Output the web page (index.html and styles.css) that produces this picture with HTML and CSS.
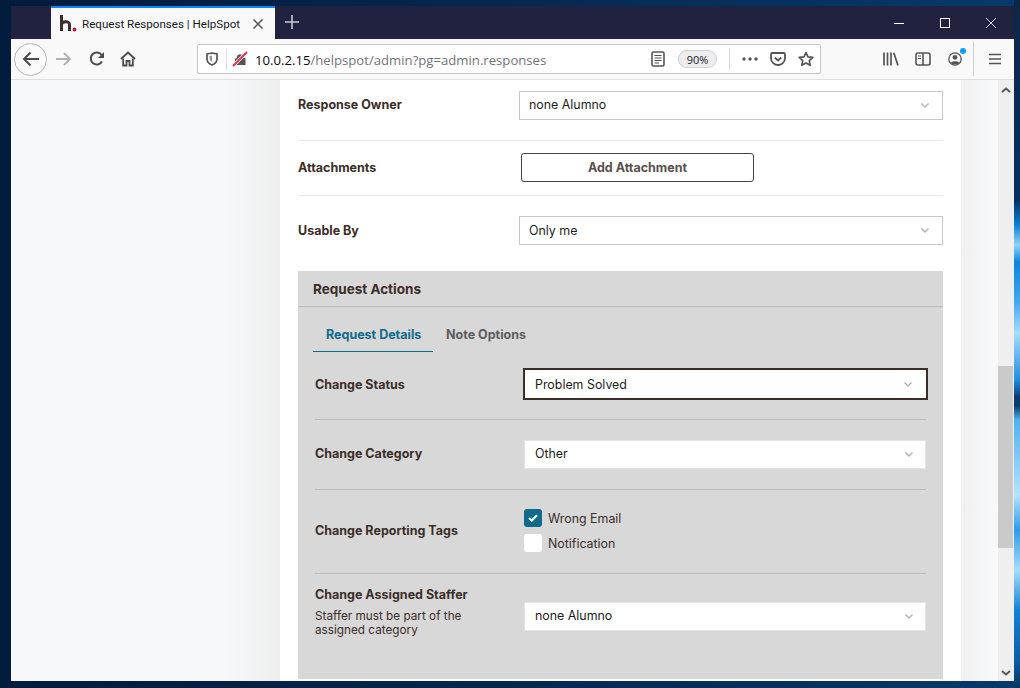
FILE: index.html
```html
<!doctype html>
<html lang="en">
    <head>
        <meta charset="utf-8">
        <meta name="viewport" content="width=device-width, initial-scale=1">
        <title>Request Responses | HelpSpot</title>
        <link rel="stylesheet" href="styles.css">
    </head>
    <body>
        <div class="ventana">
            <div class="pestanas">
                <div class="pestana">
                    <svg class="favicon" width="18" height="18" viewBox="0 0 18 18">
                        <path d="M2.5 0V16M2.5 9.5C3 6.5 10.5 5 10.5 10V16" fill="none" stroke="#3b2d27" stroke-width="3"/>
                        <circle cx="15.5" cy="14.5" r="1.9" fill="#d4173f"/>
                    </svg>
                    <span class="pestana-titulo">Request Responses | HelpSpot</span>
                    <svg class="pestana-cerrar" width="10" height="10" viewBox="0 0 10 10">
                        <path d="M0.5 0.5L9.5 9.5M9.5 0.5L0.5 9.5" stroke="#555" stroke-width="1.5"/>
                    </svg>
                </div>
                <svg class="pestana-nueva" width="14" height="14" viewBox="0 0 14 14">
                    <path d="M7 0V14M0 7H14" stroke="#c9c9d2" stroke-width="1.6"/>
                </svg>
                <div class="controles">
                    <svg width="10" height="10" viewBox="0 0 10 10"><path d="M0 5.5H10" stroke="#fff"/></svg>
                    <svg width="10" height="10" viewBox="0 0 10 10"><rect x="0.5" y="0.5" width="9" height="9" fill="none" stroke="#fff"/></svg>
                    <svg width="10" height="10" viewBox="0 0 10 10"><path d="M0 0L10 10M10 0L0 10" stroke="#fff" stroke-width="0.8"/></svg>
                </div>
            </div>

            <div class="barra">
                <div class="boton-atras">
                    <svg width="18" height="16" viewBox="0 0 18 16">
                        <path d="M17 8H2M8.5 1.5L2 8L8.5 14.5" fill="none" stroke="#4a4a4f" stroke-width="2"/>
                    </svg>
                </div>
                <svg class="icono-adelante" width="16" height="14" viewBox="0 0 16 14">
                    <path d="M0 7H14M8 1L14 7L8 13" fill="none" stroke="#b1b1b3" stroke-width="1.8"/>
                </svg>
                <svg class="icono-recargar" width="16" height="16" viewBox="0 0 16 16">
                    <path d="M13 10.5A6 6 0 1 1 12.6 4" fill="none" stroke="#4a4a4f" stroke-width="2"/>
                    <path d="M15 1V7H9Z" fill="#4a4a4f"/>
                </svg>
                <svg class="icono-casa" width="16" height="16" viewBox="0 0 16 16">
                    <path d="M1 8L8 1.5L15 8" fill="none" stroke="#4a4a4f" stroke-width="1.8"/>
                    <path d="M3.2 7.5V14.5H6.5V10H9.5V14.5H12.8V7.5" fill="none" stroke="#4a4a4f" stroke-width="1.8"/>
                </svg>

                <div class="direccion">
                    <svg class="icono-escudo" width="12" height="14" viewBox="0 0 12 14">
                        <path d="M1 2L6 1L11 2V7C11 10 8.5 12 6 13C3.5 12 1 10 1 7Z" fill="none" stroke="#555" stroke-width="1.7"/>
                        <path d="M6 3.5V10C4.5 9 3.5 8 3.5 6.5V4Z" fill="#999"/>
                    </svg>
                    <span class="separador-url"></span>
                    <svg class="icono-candado" width="16" height="16" viewBox="0 0 16 16">
                        <path d="M3 14V7.5H4.5C4.5 2 11 2 11.5 6L13.5 7.5V14Z" fill="#555"/>
                        <path d="M1 15L15 1" stroke="#fff" stroke-width="3.4"/>
                        <path d="M1 15L15 1" stroke="#e22850" stroke-width="1.8"/>
                    </svg>
                    <span class="url"><b>10.0.2.15</b>/helpspot/admin?pg=admin.responses</span>
                    <svg class="icono-lector" width="14" height="16" viewBox="0 0 14 16">
                        <rect x="1" y="1" width="12" height="14" rx="1.5" fill="none" stroke="#555" stroke-width="1.6"/>
                        <path d="M3.5 4.5H10.5M3.5 7H10.5M3.5 9.5H10.5M3.5 12H8" stroke="#555"/>
                    </svg>
                    <span class="zoom">90%</span>
                    <span class="separador-zoom"></span>
                    <svg class="icono-puntos" width="16" height="4" viewBox="0 0 16 4">
                        <circle cx="2" cy="2" r="1.7" fill="#555"/>
                        <circle cx="8" cy="2" r="1.7" fill="#555"/>
                        <circle cx="14" cy="2" r="1.7" fill="#555"/>
                    </svg>
                    <svg class="icono-pocket" width="16" height="14" viewBox="0 0 16 14">
                        <path d="M1 2.2C1 1.5 1.5 1 2.2 1H13.8C14.5 1 15 1.5 15 2.2V6.5C15 10 11.5 13 8 13C4.5 13 1 10 1 6.5Z" fill="none" stroke="#555" stroke-width="1.8"/>
                        <path d="M4.8 5.5L8 8.5L11.2 5.5" fill="none" stroke="#555" stroke-width="1.8"/>
                    </svg>
                    <svg class="icono-estrella" width="16" height="16" viewBox="0 0 16 16">
                        <path d="M8 1.5L10 5.8L14.8 6.4L11.3 9.6L12.2 14.3L8 12L3.8 14.3L4.7 9.6L1.2 6.4L6 5.8Z" fill="none" stroke="#555" stroke-width="1.7" stroke-linejoin="round"/>
                    </svg>
                </div>

                <svg class="icono-biblioteca" width="16" height="14" viewBox="0 0 16 14">
                    <path d="M1 0.5V13.5M4.5 0.5V13.5M8 0.5V13.5M10.8 0.8L15 13.5" stroke="#555" stroke-width="1.7"/>
                </svg>
                <svg class="icono-lateral" width="16" height="14" viewBox="0 0 16 14">
                    <rect x="1" y="1" width="14" height="12" rx="2" fill="none" stroke="#555" stroke-width="1.6"/>
                    <path d="M8 1V13" stroke="#555" stroke-width="1.6"/>
                    <path d="M3 4H6M3 6.5H6" stroke="#555"/>
                </svg>
                <div class="cuenta">
                    <svg width="14" height="14" viewBox="0 0 14 14">
                        <circle cx="7" cy="7" r="6.2" fill="none" stroke="#555" stroke-width="1.3"/>
                        <circle cx="7" cy="5.3" r="2.4" fill="#555"/>
                        <path d="M2.8 11C3.5 8.5 10.5 8.5 11.2 11C9 13 5 13 2.8 11Z" fill="#555"/>
                    </svg>
                    <span class="punto-azul"></span>
                </div>
                <span class="separador-barra"></span>
                <svg class="icono-menu" width="12" height="12" viewBox="0 0 12 12">
                    <path d="M0 1.5H12M0 6H12M0 10.5H12" stroke="#555" stroke-width="1.4"/>
                </svg>
            </div>

            <div class="contenido">
                <div class="margen-izq"></div>
                <main class="pagina">
                    <div class="fila fila-owner">
                        <label class="etiqueta">Response Owner</label>
                        <div class="selector">none Alumno
                            <svg class="flecha" width="8" height="5" viewBox="0 0 8 5"><path d="M0.5 0.5L4 4L7.5 0.5" fill="none" stroke="#a7b2c4" stroke-width="1.4"/></svg>
                        </div>
                    </div>
                    <div class="fila fila-adjunto">
                        <label class="etiqueta">Attachments</label>
                        <button class="boton">Add Attachment</button>
                    </div>
                    <div class="fila fila-uso">
                        <label class="etiqueta">Usable By</label>
                        <div class="selector">Only me
                            <svg class="flecha" width="8" height="5" viewBox="0 0 8 5"><path d="M0.5 0.5L4 4L7.5 0.5" fill="none" stroke="#a7b2c4" stroke-width="1.4"/></svg>
                        </div>
                    </div>

                    <section class="panel">
                        <h4 class="panel-titulo">Request Actions</h4>
                        <div class="tabs">
                            <span class="tab activa">Request Details</span>
                            <span class="tab">Note Options</span>
                        </div>
                        <div class="panel-fila fila-estado">
                            <label class="etiqueta">Change Status</label>
                            <div class="selector foco">Problem Solved
                                <svg class="flecha" width="8" height="5" viewBox="0 0 8 5"><path d="M0.5 0.5L4 4L7.5 0.5" fill="none" stroke="#a7b2c4" stroke-width="1.4"/></svg>
                            </div>
                        </div>
                        <div class="panel-fila fila-categoria">
                            <label class="etiqueta">Change Category</label>
                            <div class="selector">Other
                                <svg class="flecha" width="8" height="5" viewBox="0 0 8 5"><path d="M0.5 0.5L4 4L7.5 0.5" fill="none" stroke="#a7b2c4" stroke-width="1.4"/></svg>
                            </div>
                        </div>
                        <div class="panel-fila fila-tags">
                            <label class="etiqueta">Change Reporting Tags</label>
                            <div class="checks">
                                <div class="check">
                                    <span class="caja marcada">
                                        <svg width="10" height="8" viewBox="0 0 10 8"><path d="M1 4L3.8 6.5L9 1.2" fill="none" stroke="#fff" stroke-width="2"/></svg>
                                    </span>
                                    Wrong Email
                                </div>
                                <div class="check"><span class="caja"></span>Notification</div>
                            </div>
                        </div>
                        <div class="panel-fila fila-staff">
                            <div class="etiqueta-doble">
                                <label class="etiqueta">Change Assigned Staffer</label>
                                <p class="ayuda">Staffer must be part of the assigned category</p>
                            </div>
                            <div class="selector">none Alumno
                                <svg class="flecha" width="8" height="5" viewBox="0 0 8 5"><path d="M0.5 0.5L4 4L7.5 0.5" fill="none" stroke="#a7b2c4" stroke-width="1.4"/></svg>
                            </div>
                        </div>
                    </section>
                </main>
                <div class="margen-der"></div>
                <div class="scroll">
                    <svg width="10" height="6" viewBox="0 0 10 6"><path d="M1 5L5 1.5L9 5" fill="none" stroke="#555" stroke-width="2"/></svg>
                    <div class="scroll-pista"><div class="scroll-barra"></div></div>
                    <svg width="10" height="6" viewBox="0 0 10 6"><path d="M1 1L5 4.5L9 1" fill="none" stroke="#555" stroke-width="2"/></svg>
                </div>
            </div>
        </div>
    </body>
</html>
```

FILE: styles.css
```css
:root {
    --texto: #3b2e28;
    --texto-select: #1c1b22;
    --azul: #0f6a8b;
    --panel: #d8d8d8;
    --linea-panel: #bcbcbc;
    --linea: #e9e9e9;
}

* {
    box-sizing: border-box;
}

html, body {
    height: 100%;
}

body {
    margin: 0;
    padding: 6px 6px 7px 11px;
    overflow: hidden;
    font-family: Inter, "Liberation Sans", sans-serif;
    font-size: 12.4px;
    color: var(--texto);
    background:
        linear-gradient(180deg, #0b2747 0, #06315c 200px, #0a82d6 225px, #8fd4f8 245px, #0a86dc 262px, #3fa9ef 302px, #a8dcf8 333px, #1c8fe0 380px, #0b3d6c 397px, #0b3d6c 406px, #4eb2ee 420px, #b6e2fa 495px, #2b9ce8 530px, #a9dcf8 570px, #1183d8 610px, #0a5fa5 660px, #053663 688px) right top / 6px 100% no-repeat,
        linear-gradient(90deg, #011c3c 0, #03254a 400px, #063a6d 1020px);
}

/* ventana */
.ventana {
    height: 675px;
    display: flex;
    flex-direction: column;
}

.pestanas {
    height: 33px;
    flex-shrink: 0;
    display: flex;
    align-items: center;
    padding-left: 40px;
    background-color: #20223f;
}

.pestana {
    width: 224px;
    height: 33px;
    display: flex;
    align-items: center;
    padding: 0 12px 0 8px;
    background-color: #f9f9fa;
    border-top: 2px solid #0a84ff;
}

.favicon {
    flex-shrink: 0;
    margin-right: 5px;
}

.pestana-titulo {
    flex: 1;
    font-family: Roboto, sans-serif;
    font-size: 11.6px;
    color: #18181b;
    white-space: nowrap;
}

.pestana-nueva {
    margin: -1px 0 0 10px;
}

.controles {
    margin-left: auto;
    display: flex;
    gap: 36px;
    padding-right: 18px;
}

.barra {
    height: 41px;
    flex-shrink: 0;
    display: flex;
    align-items: center;
    padding-left: 3px;
    background-color: #f9f9fa;
    border-bottom: 1px solid #dedee0;
}

.boton-atras {
    width: 33px;
    height: 33px;
    border: 1px solid #b6b6b8;
    border-radius: 50%;
    display: flex;
    align-items: center;
    justify-content: center;
    background-color: #fbfbfb;
}

.icono-adelante {
    margin-left: 9px;
}

.icono-recargar {
    margin-left: 17px;
}

.icono-casa {
    margin-left: 15px;
}

.direccion {
    width: 624px;
    height: 30px;
    margin-left: 61px;
    display: flex;
    align-items: center;
    background-color: #fff;
    border: 1px solid #c6c6c8;
    border-radius: 2px;
}

.icono-escudo {
    margin-left: 8px;
}

.separador-url {
    width: 1px;
    height: 22px;
    margin: 0 5px 0 8px;
    background-color: #dcdcdc;
}

.url {
    margin-left: 7px;
    padding-top: 2px;
    font-family: "Open Sans", sans-serif;
    font-size: 13.15px;
    color: #737378;
    white-space: nowrap;
}

.url b {
    font-weight: 400;
    color: #0c0c0d;
}

.icono-lector {
    margin-left: auto;
}

.zoom {
    width: 39px;
    height: 18px;
    margin-left: 13px;
    text-align: center;
    line-height: 17px;
    font-family: "Open Sans", sans-serif;
    font-size: 11px;
    color: #18181b;
    background-color: #ededf0;
    border: 1px solid #d0d0d2;
    border-radius: 9px;
}

.separador-zoom {
    width: 1px;
    height: 22px;
    margin: 0 12px;
    background-color: #d7d7db;
}

.icono-puntos {
    margin-right: 12px;
}

.icono-pocket {
    margin-right: 12px;
}

.icono-estrella {
    margin-right: 6px;
}

.icono-biblioteca {
    margin-left: 62px;
}

.icono-lateral {
    margin-left: 16px;
}

.cuenta {
    position: relative;
    display: flex;
    margin-left: 17px;
}

.punto-azul {
    position: absolute;
    top: -4px;
    right: -4px;
    width: 6px;
    height: 6px;
    border-radius: 50%;
    background-color: #0a9dff;
}

.separador-barra {
    width: 1px;
    height: 34px;
    margin: 0 15px 0 11px;
    background-color: #d0d0d2;
}

/* pagina */
.contenido {
    flex: 1;
    min-height: 0;
    display: flex;
    background-color: #fff;
}

.margen-izq {
    width: 269px;
    background: linear-gradient(90deg, #f7f8fa 0, #f7f8fa 215px, #eeeeee 269px);
}

.margen-der {
    width: 36px;
    margin-right: 1px;
    background: linear-gradient(90deg, #f0f0f0 0, #f8f9fa 100%);
}

.pagina {
    width: 681px;
    padding: 0 18px;
    background-color: #fff;
}

.etiqueta {
    font-size: 12.5px;
    font-weight: 700;
    color: var(--texto);
}

.fila > .etiqueta,
.panel-fila > .etiqueta {
    padding-bottom: 2px;
}

.selector {
    position: relative;
    height: 29px;
    padding: 0 0 2px 9px;
    display: flex;
    align-items: center;
    color: var(--texto-select);
    background-color: #fff;
    border: 1px solid #c9c9c9;
}

.flecha {
    position: absolute;
    right: 13px;
    top: 11px;
}

.fila {
    display: grid;
    grid-template-columns: 221px 424px;
    align-items: center;
    width: 645px;
    border-bottom: 1px solid var(--linea);
}

.fila-owner {
    height: 61px;
    padding-bottom: 10px;
}

.fila-adjunto {
    height: 55px;
    padding-bottom: 2px;
}

.fila-adjunto > .etiqueta,
.fila-uso > .etiqueta,
.fila-estado > .etiqueta {
    padding-bottom: 0;
}

.fila-uso {
    height: 49px;
    padding-top: 20px;
    border-bottom: none;
}

.fila-uso .selector {
    padding-bottom: 0;
}

.boton {
    width: 233px;
    height: 29px;
    margin-left: 2px;
    padding: 0;
    font-family: inherit;
    font-size: 12.5px;
    font-weight: 700;
    color: #58504b;
    background-color: #fff;
    border: 1px solid #4a4240;
    border-radius: 3px;
}

.panel {
    margin-top: 26px;
    height: 408px;
    background-color: var(--panel);
}

.panel-titulo {
    height: 36px;
    margin: 0;
    padding: 0 15px;
    line-height: 36px;
    font-size: 13.5px;
    font-weight: 700;
    border-bottom: 1px solid var(--linea-panel);
}

.tabs {
    display: flex;
    margin: 0 15px;
    height: 45px;
}

.tab {
    padding: 20px 12px 0 13px;
    font-size: 12.5px;
    font-weight: 700;
    color: #5c5c5c;
    white-space: nowrap;
}

.tab.activa {
    width: 120px;
    padding-right: 0;
    color: var(--azul);
    border-bottom: 1px solid var(--azul);
}

.panel-fila {
    display: grid;
    grid-template-columns: 209px 402px;
    align-items: center;
    margin: 0 17px;
    border-bottom: 1px solid var(--linea-panel);
}

.panel-fila:last-child {
    border-bottom: none;
}

.panel-fila .selector {
    padding-left: 10px;
    border: 1px solid #e4e4e4;
}

.panel-fila .flecha {
    right: 12px;
}

.panel-fila .selector.foco {
    height: 32px;
    width: 405px;
    margin-left: -1px;
    padding: 0 0 0 10px;
    border: 2px solid var(--texto);
}

.selector.foco .flecha {
    right: 14px;
    top: 12px;
}

.fila-estado {
    height: 68px;
    padding-bottom: 3px;
}

.fila-categoria {
    height: 70px;
}

.fila-tags {
    height: 84px;
}

.fila-staff {
    height: 84px;
}

.checks {
    display: flex;
    flex-direction: column;
    gap: 7px;
    padding-bottom: 2px;
}

.check {
    display: flex;
    align-items: center;
    height: 18px;
}

.caja {
    width: 18px;
    height: 18px;
    margin-right: 6px;
    display: flex;
    align-items: center;
    justify-content: center;
    background-color: #fff;
    border-radius: 3px;
}

.caja.marcada {
    background-color: var(--azul);
}

.etiqueta-doble {
    padding: 0 30px 8px 0;
}

.ayuda {
    margin: 7px 0 0;
    font-size: 11.75px;
    line-height: 14px;
}

/* scroll */
.scroll {
    width: 16px;
    display: flex;
    flex-direction: column;
    align-items: center;
    padding: 7px 0 5px;
    background-color: #efefef;
}

.scroll-pista {
    flex: 1;
    width: 100%;
    padding-top: 273px;
}

.scroll-barra {
    width: 15px;
    height: 182px;
    background-color: #cacaca;
}
```
